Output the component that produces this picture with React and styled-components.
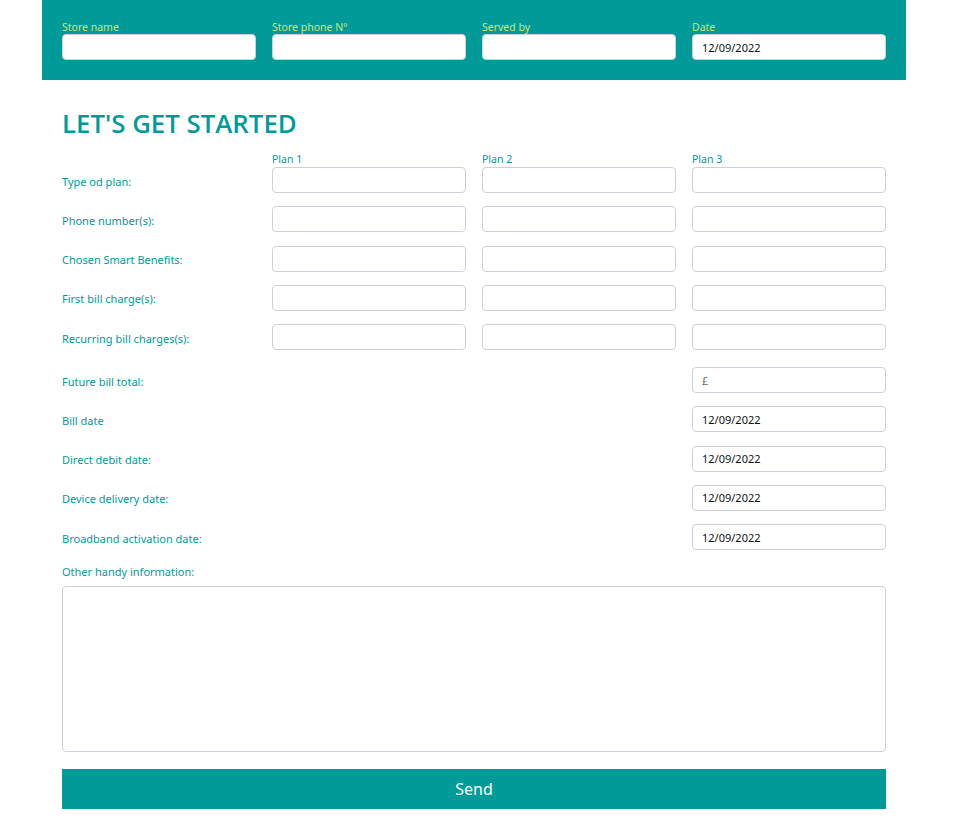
import React from "react";
import styled, { createGlobalStyle } from "styled-components";

const GlobalStyle = createGlobalStyle`
    * { box-sizing: border-box; }
    body {
        margin: 0;
        background: #ffffff;
        font-family: "Noto Sans", "Open Sans", sans-serif;
    }
`;

const plans = ["Plan 1", "Plan 2", "Plan 3"];

const planRows = [
    "Type od plan:",
    "Phone number(s):",
    "Chosen Smart Benefits:",
    "First bill charge(s):",
    "Recurring bill charges(s):",
];

const singleRows = [
    { label: "Future bill total:", value: "£", faded: true },
    { label: "Bill date", value: "12/09/2022" },
    { label: "Direct debit date:", value: "12/09/2022" },
    { label: "Device delivery date:", value: "12/09/2022" },
    { label: "Broadband activation date:", value: "12/09/2022" },
];

const App = () => {
    return (
        <>
            <GlobalStyle />
            <StPage>
                <StHeader>
                    {["Store name", "Store phone N°", "Served by", "Date"].map((el) => (
                        <StField key={el}>
                            <StHeadLabel>{el}</StHeadLabel>
                            <StInput defaultValue={el === "Date" ? "12/09/2022" : ""} />
                        </StField>
                    ))}
                </StHeader>

                <StBody>
                    <StTitle>LET'S GET STARTED</StTitle>

                    <StGrid>
                        <span />
                        {plans.map((el) => (
                            <StPlanLabel key={el}>{el}</StPlanLabel>
                        ))}
                        {planRows.map((row) => (
                            <React.Fragment key={row}>
                                <StRowLabel>{row}</StRowLabel>
                                {plans.map((p) => (
                                    <StInput key={p} />
                                ))}
                            </React.Fragment>
                        ))}
                    </StGrid>

                    <StGrid $top={17}>
                        {singleRows.map((row) => (
                            <React.Fragment key={row.label}>
                                <StRowLabel>{row.label}</StRowLabel>
                                <StInput
                                    $col={4}
                                    $faded={row.faded}
                                    defaultValue={row.value}
                                />
                            </React.Fragment>
                        ))}
                    </StGrid>

                    <StNotesLabel>Other handy information:</StNotesLabel>
                    <StTextArea />

                    <StButton type="button">Send</StButton>
                </StBody>
            </StPage>
        </>
    );
};

export default App;

const StPage = styled.div`
    width: 864px;
    margin-left: 42px;
`;

const StHeader = styled.div`
    background-color: #009b98;
    padding: 20px;
    display: grid;
    grid-template-columns: repeat(4, 1fr);
    gap: 16px;
`;

const StField = styled.div`
    display: flex;
    flex-direction: column;
`;

const StHeadLabel = styled.label`
    font-size: 10.5px;
    line-height: 14px;
    color: #cbe57a;
`;

const StInput = styled.input`
    width: 100%;
    height: 26px;
    border: 1px solid #cdd1d9;
    border-radius: 4px;
    background: #ffffff;
    padding: 0 9px;
    font-family: "Noto Sans", "Open Sans", sans-serif;
    font-size: 11px;
    color: ${(p) => (p.$faded ? "#666666" : "#111111")};
    grid-column: ${(p) => (p.$col ? p.$col : "auto")};
    outline: none;
`;

const StBody = styled.div`
    padding: 26px 20px 12px;
`;

const StTitle = styled.h1`
    margin: 0 0 12px;
    font-family: "Open Sans", "Noto Sans", sans-serif;
    font-size: 25.8px;
    line-height: 34px;
    font-weight: 600;
    color: #009b98;
`;

const StGrid = styled.div`
    display: grid;
    grid-template-columns: repeat(4, 1fr);
    column-gap: 16px;
    row-gap: 13.25px;
    margin-top: ${(p) => (p.$top ? p.$top : 0)}px;
    align-items: center;

    & > :nth-child(-n + 4) {
        margin-bottom: ${(p) => (p.$top ? 0 : -12.25)}px;
    }
`;

const StPlanLabel = styled.span`
    font-size: 10.5px;
    line-height: 14px;
    color: #009b98;
    align-self: end;
`;

const StRowLabel = styled.span`
    font-size: 11px;
    line-height: 14px;
    color: #009b98;
    padding-top: 3px;
`;

const StNotesLabel = styled.div`
    margin-top: 15px;
    font-size: 11px;
    line-height: 14px;
    color: #009b98;
`;

const StTextArea = styled.textarea`
    display: block;
    width: 100%;
    height: 166px;
    margin-top: 7px;
    border: 1px solid #cdd1d9;
    border-radius: 4px;
    resize: none;
    outline: none;
`;

const StButton = styled.button`
    display: block;
    width: 100%;
    height: 40px;
    margin-top: 17px;
    border: none;
    background-color: #009b98;
    color: #ffffff;
    font-family: "Noto Sans", "Open Sans", sans-serif;
    font-size: 16px;
    cursor: pointer;
`;
